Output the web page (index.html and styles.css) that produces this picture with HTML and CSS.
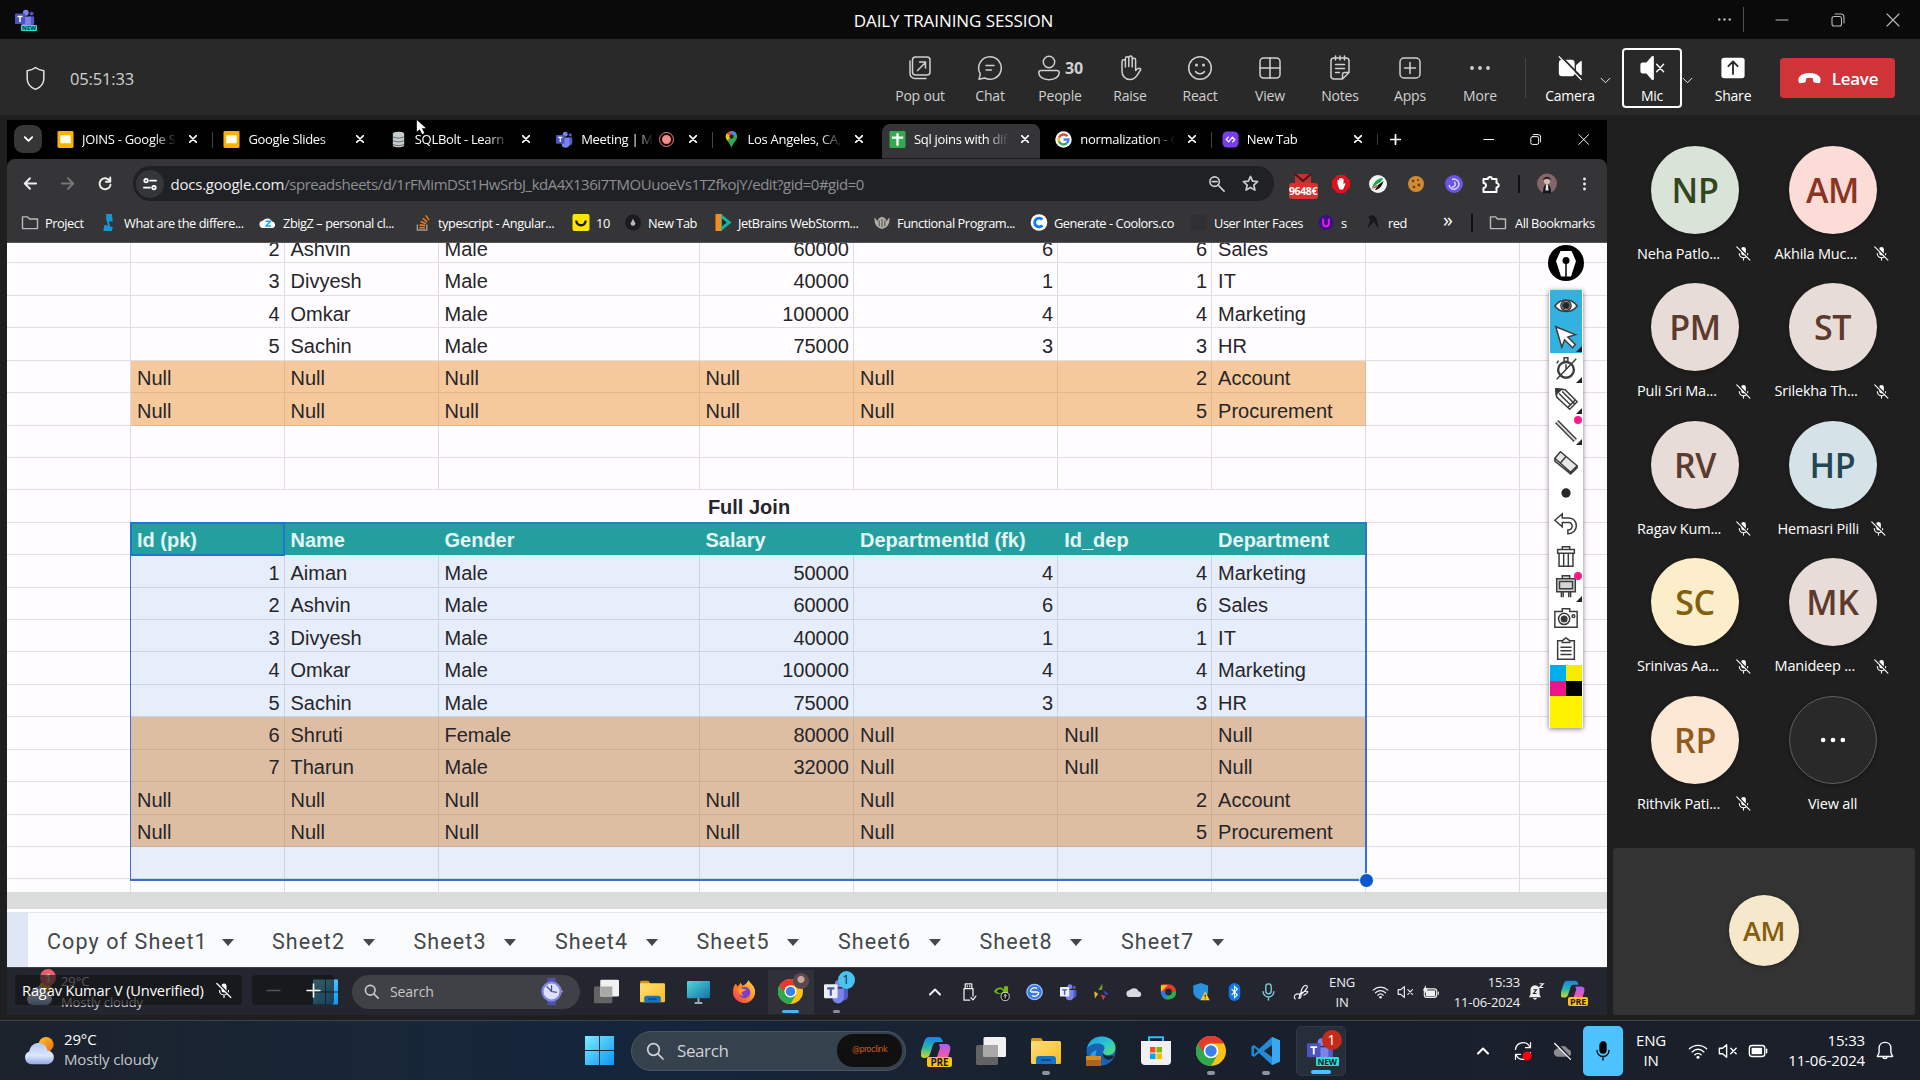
FILE: index.html
```html
<!DOCTYPE html>
<html lang="en">
<head>
<meta charset="utf-8">
<title>DAILY TRAINING SESSION</title>
<link rel="stylesheet" href="styles.css">
</head>
<body>
<svg class="defs" width="0" height="0">
  <defs>
    <linearGradient id="gWin" x1="0" y1="0" x2="1" y2="1"><stop offset="0" stop-color="#7fecff"/><stop offset="1" stop-color="#0a94f5"/></linearGradient>
    <linearGradient id="gCloud" x1="0" y1="0" x2="0" y2="1"><stop offset="0" stop-color="#b5c8f5"/><stop offset=".6" stop-color="#dbe6fb"/><stop offset="1" stop-color="#8ea9e6"/></linearGradient>
    <linearGradient id="gSun" x1="0" y1="0" x2="1" y2="1"><stop offset="0" stop-color="#ffc53a"/><stop offset="1" stop-color="#f06a00"/></linearGradient>
    <linearGradient id="gCopA" x1="0" y1="0" x2="0" y2="1"><stop offset="0" stop-color="#1e7fe8"/><stop offset=".5" stop-color="#24b7a8"/><stop offset="1" stop-color="#d7d52a"/></linearGradient>
    <linearGradient id="gCopB" x1="0" y1="0" x2="0" y2="1"><stop offset="0" stop-color="#a95cf5"/><stop offset=".6" stop-color="#ec5aa8"/><stop offset="1" stop-color="#ff8a4c"/></linearGradient>
    <linearGradient id="gFold" x1="0" y1="0" x2="1" y2="1"><stop offset="0" stop-color="#ffe07a"/><stop offset="1" stop-color="#f9b91d"/></linearGradient>
    <linearGradient id="gEdge" x1="0" y1="0" x2="1" y2="1"><stop offset="0" stop-color="#1b9de2"/><stop offset=".5" stop-color="#2bc3d2"/><stop offset="1" stop-color="#5be36a"/></linearGradient>
    <linearGradient id="gDesk" x1="0" y1="0" x2="1" y2="1"><stop offset="0" stop-color="#4fd8de"/><stop offset="1" stop-color="#1571a5"/></linearGradient>
    <linearGradient id="gFox" x1="1" y1="0" x2="0" y2="1"><stop offset="0" stop-color="#ffe14a"/><stop offset=".5" stop-color="#ff8a1f"/><stop offset="1" stop-color="#ef2a5b"/></linearGradient>

    <symbol id="shield" viewBox="0 0 24 24"><path d="M12 1.500c2.400 2 4.900 2.800 8 3v7.500c0 5-3 8.500-8 10.500-5-2-8-5.500-8-10.500V4.500c3.100-.2 5.600-1 8-3z"/></symbol>
    <symbol id="popout" viewBox="0 0 26 26"><rect x="5.500" y="2" width="17.500" height="18" rx="3"/><path d="M3 6v12.500a5 5 0 0 0 5 5h11M10.500 15.500l8-8M12.500 7h6v6"/></symbol>
    <symbol id="chat" viewBox="0 0 26 26"><path d="M13 1.700a11.300 11.300 0 1 1-5.300 21.300L2 24.300l1.300-5.500A11.300 11.300 0 0 1 13 1.700zM9 10.500h8M9 15h5.500"/></symbol>
    <symbol id="people" viewBox="0 0 26 26"><circle cx="13" cy="7" r="5.700"/><path d="M5 15.500h16a2.200 2.200 0 0 1 2.200 2.200c0 4-4 7-10.200 7s-10.200-3-10.200-7A2.200 2.200 0 0 1 5 15.500z"/></symbol>
    <symbol id="hand" viewBox="0 0 26 26"><path d="M5 14V6.500a1.700 1.700 0 0 1 3.400 0V12V3.500a1.700 1.700 0 0 1 3.400 0V11.500V2.800a1.700 1.700 0 0 1 3.400 0V12V5a1.700 1.700 0 0 1 3.400 0V15.500c1.300-1.600 3.300-2.700 4.600-1.800.8.600.4 1.400-.3 2.300-2.500 3.200-4 8.500-9.600 8.500C7.700 24.500 5 20.500 5 16z"/></symbol>
    <symbol id="smile" viewBox="0 0 26 26"><circle cx="13" cy="13" r="11.300"/><path d="M8.500 16.500c2 3 7 3 9 0"/><g class="dot"><circle cx="9.500" cy="10" r="1.500"/><circle cx="16.500" cy="10" r="1.500"/></g></symbol>
    <symbol id="gridv" viewBox="0 0 26 26"><rect x="3" y="3" width="20" height="20" rx="3.500"/><path d="M13 3v20M3 13h20"/></symbol>
    <symbol id="notes" viewBox="0 0 26 26"><path d="M7 3h12a3 3 0 0 1 3 3v11.500L15.500 24H7a3 3 0 0 1-3-3V6a3 3 0 0 1 3-3zM22 17.500h-4.500a2 2 0 0 0-2 2V24M8.500 1v4M13 1v4M17.500 1v4M8.500 9.500h9M8.500 13.500h9M8.500 17.500h4"/></symbol>
    <symbol id="apps" viewBox="0 0 26 26"><rect x="3" y="3" width="20" height="20" rx="4"/><path d="M13 7.500v11M7.500 13h11"/></symbol>
    <symbol id="dots" viewBox="0 0 26 26"><g class="dot"><circle cx="5" cy="13" r="1.900"/><circle cx="13" cy="13" r="1.900"/><circle cx="21" cy="13" r="1.900"/></g></symbol>
    <symbol id="camoff" viewBox="0 0 28 28"><g class="dot"><rect x="2" y="5" width="17" height="18" rx="3.500"/><path d="M20.500 11l5-4.500c.6-.4 1.200 0 1.200.6v14c0 .7-.7 1-1.200.6l-5-4.500z"/></g><path class="cut" d="M4.500 1.500L28 26"/><path d="M2.500 2L26 26.500"/></symbol>
    <symbol id="spkoff" viewBox="0 0 28 28"><path class="dot" d="M16 1.500v25c-1 .8-1.800.5-2.500-.2L8 20H4a2.500 2.500 0 0 1-2.500-2.500v-7A2.500 2.500 0 0 1 4 8h4l5.500-6.300c.7-.6 1.500-.9 2.500-.2z"/><path d="M19 10l7.500 8M26.500 10L19 18"/></symbol>
    <symbol id="share" viewBox="0 0 28 28"><rect class="dot" x="1.500" y="3" width="25" height="22" rx="3"/><path class="cutl" d="M14 20.500V7.500M9 12l5-5 5 5"/></symbol>
    <symbol id="phone" viewBox="0 0 26 16"><path class="dot" d="M13 2c5 0 9 1.500 11 4.500 1.200 1.800 1 4 .3 5.700-.3.700-1 1-1.700.8l-4.300-.8c-.9-.2-1.400-.9-1.500-1.800l-.3-2.600a13 13 0 0 0-7 0l-.3 2.600c-.1.900-.6 1.600-1.500 1.800L3.400 13c-.7.200-1.400-.1-1.700-.8C1 10.500.8 8.300 2 6.500 4 3.500 8 2 13 2z"/></symbol>
    <symbol id="chev" viewBox="0 0 12 8"><path d="M1 1.500l5 5 5-5"/></symbol>
    <symbol id="chevup" viewBox="0 0 12 8"><path d="M1 6.500l5-5 5 5"/></symbol>
    <symbol id="min" viewBox="0 0 14 14"><path d="M1 7h12"/></symbol>
    <symbol id="rest" viewBox="0 0 14 14"><rect x="1" y="3.500" width="9.500" height="9.500" rx="2"/><path d="M4 1h6a3 3 0 0 1 3 3v6"/></symbol>
    <symbol id="x" viewBox="0 0 14 14"><path d="M1 1l12 12M13 1L1 13"/></symbol>
    <symbol id="plus" viewBox="0 0 14 14"><path d="M7 1v12M1 7h12"/></symbol>
    <symbol id="micoff" viewBox="0 0 16 16"><rect class="dot" x="5.500" y="1" width="5" height="9" rx="2.500"/><path d="M3.500 8a4.500 4.500 0 0 0 9 0M8 12.500V15"/><path class="cut" d="M1.500 .5l14 14"/><path d="M.8 1l14 14"/></symbol>
    <symbol id="mic" viewBox="0 0 16 20"><rect class="body" x="5" y="1" width="6" height="11" rx="3"/><path d="M2 9.500a6 6 0 0 0 12 0M8 15.500V19"/></symbol>
    <symbol id="teams" viewBox="0 0 24 24"><circle cx="13" cy="4.500" r="3.500" fill="#7b83eb"/><circle cx="20" cy="5.500" r="2.300" fill="#5059c9"/><path d="M17 9h6v8a4 4 0 0 1-6 3z" fill="#5059c9"/><path d="M8 9h11v9a5.500 5.500 0 0 1-11 0z" fill="#7b83eb"/><rect x="0" y="5.500" width="12" height="12.500" rx="1" fill="#4b53bc"/><path d="M3 9h6M6 9v6.500" stroke="#fff" stroke-width="1.700" fill="none"/></symbol>
    <symbol id="teamsw" viewBox="0 0 24 24"><circle cx="14" cy="4.500" r="3.500" fill="#7b83eb"/><circle cx="20" cy="5.500" r="2.300" fill="#5059c9"/><path d="M17 9h6v8a4 4 0 0 1-6 3z" fill="#5059c9"/><path d="M8 9h11v9a5.500 5.500 0 0 1-11 0z" fill="#7b83eb"/><rect x="0" y="5" width="13" height="13.500" rx="1" fill="#eceefc"/><path d="M3 9h7M6.500 9v7" stroke="#4b53bc" stroke-width="2" fill="none"/></symbol>
    <symbol id="slides" viewBox="0 0 18 18"><rect x=".5" y="0" width="17" height="18" rx="1.500" fill="#f4b400"/><rect x="3.500" y="4.500" width="11" height="8.500" fill="#fffbe8"/></symbol>
    <symbol id="db" viewBox="0 0 18 18"><path d="M3 3c0-3 12-3 12 0v12c0 3-12 3-12 0z" fill="#c5ccce"/><path d="M3 6c2 2 10 2 12 0M3 10c2 2 10 2 12 0M3 14c2 2 10 2 12 0" stroke="#5a6468" fill="none"/></symbol>
    <symbol id="pin" viewBox="0 0 18 18"><path d="M9 0a6 6 0 0 1 6 6c0 4-4.500 6-6 12C7.500 12 3 10 3 6a6 6 0 0 1 6-6z" fill="#34a853"/><path d="M9 0a6 6 0 0 0-5 2.700L9 6z" fill="#ea4335"/><path d="M4 2.700A6 6 0 0 0 4.500 10L9 6z" fill="#fbbc04"/><path d="M9 0a6 6 0 0 1 5.500 3.500L9 6z" fill="#4285f4"/><circle cx="9" cy="6" r="2.200" fill="#123"/></symbol>
    <symbol id="sheets" viewBox="0 0 18 18"><rect x=".5" y="0" width="17" height="18" rx="1.500" fill="#34a853"/><path d="M9 2.500v13M3 7h12" stroke="#fff" stroke-width="2.400"/></symbol>
    <symbol id="google" viewBox="0 0 18 18"><circle cx="9" cy="9" r="8.700" fill="#fff"/><g fill="none" stroke-width="2.600"><path d="M13 5.500A5.200 5.200 0 0 0 4.300 6.800" stroke="#ea4335"/><path d="M4.300 6.800a5.200 5.200 0 0 0 0 4.400" stroke="#fbbc04"/><path d="M4.300 11.200a5.200 5.200 0 0 0 8.300 1.600" stroke="#34a853"/><path d="M12.600 12.800A5 5 0 0 0 14.200 9H9" stroke="#4285f4"/></g></symbol>
    <symbol id="codeapp" viewBox="0 0 18 18"><rect x=".5" y=".5" width="17" height="17" rx="5" fill="#7a3cf0"/><path d="M7 6L4.500 9 7 11.500l4-5L13.500 9 11 12" stroke="#fff" stroke-width="1.300" fill="none"/></symbol>
    <symbol id="folder" viewBox="0 0 18 16"><path d="M1 2h5.500l2 2.200H17V14.500H1z"/></symbol>
    <symbol id="win" viewBox="0 0 30 30"><path d="M0 0h14.500v14.500H0zM15.500 0H30v14.500H15.500zM0 15.500h14.500V30H0zM15.500 15.500H30V30H15.500z" fill="url(#gWin)"/></symbol>
    <symbol id="search" viewBox="0 0 18 18"><circle cx="7.500" cy="7.500" r="5.800"/><path d="M11.700 11.700L17 17"/></symbol>
    <symbol id="taskview" viewBox="0 0 30 28"><rect x="0" y="8" width="22" height="20" rx="1.500" fill="#636363"/><rect x="7.500" y="0" width="22.500" height="20" rx="1.500" fill="#f1f1f1"/><rect x="7.500" y="8" width="14.500" height="12" fill="#a8a8a8"/></symbol>
    <symbol id="copilot" viewBox="0 0 30 30"><path d="M8 1h9c3 0 4 2 5 5h-6c-3 0-4 2-5 6l-2 6c-1 3-3 4-6 4-3 0-4-3-3-7l3-9c1-3 2-5 5-5z" fill="url(#gCopA)"/><path d="M18 8h7c4 0 5 3 4 7l-3 9c-1 2-2 3-5 3H10c4 0 5-3 6-6l3-9z" fill="url(#gCopB)"/></symbol>
    <symbol id="explorer" viewBox="0 0 30 28"><path d="M0 3a2 2 0 0 1 2-2h8l3 4h-13z" fill="#d99309"/><rect x="0" y="4" width="30" height="23" rx="1.500" fill="url(#gFold)"/><path d="M5 27v-5a3 3 0 0 1 3-3h14a3 3 0 0 1 3 3v5z" fill="#1573c6"/><path d="M10 23h10" stroke="#0a3f7c" stroke-width="1.500"/></symbol>
    <symbol id="edge" viewBox="0 0 30 30"><circle cx="15" cy="15" r="14.500" fill="#1463b4"/><path d="M1 13C3 4 9 .5 16 .5c8 0 13.500 5 13.500 11 0 5-3.500 7.500-7.500 7.500s-5-1.500-5-3c0-1 1.500-1.500 1.500-4s-3-4.500-7-4.500S2.500 9.500 1 13z" fill="url(#gEdge)"/><path d="M17 17c1 3 5 4 9 2.500l2 1c-2 3-5 3.500-7 3-3-1-4.500-3.500-4-6.500z" fill="#1a2434"/><path d="M11 14c-3 5-1 12 5 14.500-5 .5-9-1-11-4-2-4-.5-9 6-10.500z" fill="#2f9fe6"/><rect x="0" y="20" width="15" height="10" fill="#a9671c"/><path d="M0 20h15v4H0z" fill="#d78b22"/></symbol>
    <symbol id="store" viewBox="0 0 30 30"><path d="M8 6V1.200h14V6" fill="none" stroke="#2cc0f5" stroke-width="2"/><path d="M0 5h30v20a4 4 0 0 1-4 4H4a4 4 0 0 1-4-4z" fill="#f1f1f4"/><path d="M9 11h5.500v5.500H9z" fill="#f25022"/><path d="M15.500 11H21v5.500h-5.500z" fill="#7fba00"/><path d="M9 17.500h5.500V23H9z" fill="#00a4ef"/><path d="M15.500 17.500H21V23h-5.500z" fill="#ffb900"/></symbol>
    <symbol id="chrome" viewBox="0 0 30 30"><circle cx="15" cy="15" r="15" fill="#fbc116"/><path d="M2 7.500A15 15 0 0 0 15 30l6.500-11.200L15 15z" fill="#2da94f"/><path d="M2 7.500A15 15 0 0 1 28 7.500H15a7.500 7.500 0 0 0-6.500 11.300z" fill="#e33b2e"/><circle cx="15" cy="15" r="7.300" fill="#fff"/><circle cx="15" cy="15" r="5.700" fill="#3b80ee"/></symbol>
    <symbol id="vscode" viewBox="0 0 30 30"><path d="M21 1l8 3.500v21L21 29 8 17 3 21l-2.500-1.500v-9L3 9l5 4z" fill="#2489d6"/><path d="M21 9v12l-8-6z" fill="#1b2635"/><path d="M3 11.500L7 15l-4 3.500z" fill="#1b2635"/><path d="M21 1l8 3.500v21L21 29z" fill="#38a8f2"/></symbol>
    <symbol id="wifi" viewBox="0 0 22 18"><path d="M1.500 6.500c5.500-5 13.500-5 19 0M4.500 10c4-3.500 9-3.500 13 0M7.500 13.200c2-2 5-2 7 0"/><circle class="dot" cx="11" cy="15.800" r="1.700"/></symbol>
    <symbol id="vol" viewBox="0 0 22 18"><path d="M9.500 2v14L5 12H1.500V6H5zM14 6l6 6M20 6l-6 6"/></symbol>
    <symbol id="bat" viewBox="0 0 22 16"><rect x="1.500" y="2" width="17" height="12" rx="3"/><rect class="dot" x="4" y="4.500" width="11.500" height="7"/><path d="M20.500 6v4"/></symbol>
    <symbol id="bell" viewBox="0 0 20 22"><path d="M10 1.500c3.800 0 6.500 2.700 6.500 6.500v5l2 4h-17l2-4V8c0-3.800 2.700-6.500 6.500-6.500zM7.500 17.500c.5 2.500 4.500 2.500 5 0"/></symbol>
    <symbol id="cloud" viewBox="0 0 30 20"><path d="M7 19a6 6 0 0 1-.5-12A9 9 0 0 1 22 8.500 5.500 5.500 0 0 1 23.500 19z"/></symbol>
    <symbol id="weather" viewBox="0 0 32 30"><circle cx="22.500" cy="8" r="8" fill="url(#gSun)"/><path d="M7 29A7 7 0 0 1 4.500 15.500C6 9 10 6.500 14.500 6.500c5 0 8.500 3 9.500 8A7.300 7.300 0 0 1 24.500 29z" fill="url(#gCloud)"/></symbol>
  </defs>
</svg>

<header class="titlebar">
  <span class="app-icon"><svg class="ic20"><use href="#teams"/></svg><b class="new-tag">NEW</b></span>
  <h1>DAILY TRAINING SESSION</h1>
  <div class="win-ctl">
    <svg class="ln more"><use href="#dots"/></svg><i class="vr"></i>
    <svg class="ln"><use href="#min"/></svg><svg class="ln"><use href="#rest"/></svg><svg class="ln"><use href="#x"/></svg>
  </div>
</header>

<section class="callbar">
  <svg class="ln guard"><use href="#shield"/></svg><span class="timer">05:51:33</span>
  <nav class="actions">
    <button><svg class="ln"><use href="#popout"/></svg><span>Pop out</span></button>
    <button><svg class="ln"><use href="#chat"/></svg><span>Chat</span></button>
    <button><span class="pp"><svg class="ln"><use href="#people"/></svg><b>30</b></span><span>People</span></button>
    <button><svg class="ln"><use href="#hand"/></svg><span>Raise</span></button>
    <button><svg class="ln"><use href="#smile"/></svg><span>React</span></button>
    <button><svg class="ln"><use href="#gridv"/></svg><span>View</span></button>
    <button><svg class="ln"><use href="#notes"/></svg><span>Notes</span></button>
    <button><svg class="ln"><use href="#apps"/></svg><span>Apps</span></button>
    <button><svg class="ln"><use href="#dots"/></svg><span>More</span></button>
  </nav>
  <i class="vr tall"></i>
  <div class="actions media">
    <button><svg class="ln"><use href="#camoff"/></svg><span>Camera</span></button>
    <svg class="ln caret"><use href="#chev"/></svg>
    <button class="focus"><svg class="ln"><use href="#spkoff"/></svg><span>Mic</span></button>
    <svg class="ln caret"><use href="#chev"/></svg>
    <button class="sharebtn"><svg class="ln"><use href="#share"/></svg><span>Share</span></button>
  </div>
  <button class="leave"><svg><use href="#phone"/></svg>Leave</button>
</section>

<main class="stage">
  <section class="shared">
    <div class="tabstrip">
      <span class="tabsearch"><svg class="ln"><use href="#chev"/></svg></span>
      <div class="tab"><svg><use href="#slides"/></svg><span>JOINS - Google S</span><svg class="ln cl"><use href="#x"/></svg></div>
      <div class="tab sep"><svg><use href="#slides"/></svg><span>Google Slides</span><svg class="ln cl"><use href="#x"/></svg></div>
      <div class="tab"><svg><use href="#db"/></svg><span>SQLBolt - Learn</span><svg class="ln cl"><use href="#x"/></svg></div>
      <div class="tab"><svg><use href="#teams"/></svg><span class="short">Meeting | Mi</span><i class="rec"></i><svg class="ln cl"><use href="#x"/></svg></div>
      <div class="tab sep"><svg><use href="#pin"/></svg><span>Los Angeles, CA,</span><svg class="ln cl"><use href="#x"/></svg></div>
      <div class="tab active"><svg><use href="#sheets"/></svg><span>Sql joins with dif</span><svg class="ln cl"><use href="#x"/></svg></div>
      <div class="tab"><svg><use href="#google"/></svg><span>normalization - G</span><svg class="ln cl"><use href="#x"/></svg></div>
      <div class="tab sep"><svg><use href="#codeapp"/></svg><span>New Tab</span><svg class="ln cl"><use href="#x"/></svg></div>
      <div class="newtab"><svg class="ln"><use href="#plus"/></svg></div>
      <div class="bwin"><svg class="ln"><use href="#min"/></svg><svg class="ln"><use href="#rest"/></svg><svg class="ln"><use href="#x"/></svg></div>
    </div>
    <div class="addr">
      <svg class="ln nav" viewBox="0 0 16 16"><path d="M15 8H2M8 2L2 8l6 6"/></svg>
      <svg class="ln nav dim" viewBox="0 0 16 16"><path d="M1 8h13M8 2l6 6-6 6"/></svg>
      <svg class="ln nav" viewBox="0 0 16 16"><path d="M13.500 5A6.300 6.300 0 1 0 14.300 9.500M14 1v5H9"/></svg>
      <div class="omni">
        <span class="site"><svg class="ln" viewBox="0 0 16 16"><circle cx="3.500" cy="4" r="2"/><path d="M8 4h7M1 12h7"/><circle cx="12.500" cy="12" r="2"/></svg></span>
        <span class="url"><b>docs.google.com</b>/spreadsheets/d/1rFMimDSt1HwSrbJ_kdA4X136i7TMOUuoeVs1TZfkojY/edit?gid=0#gid=0</span>
        <svg class="ln oi" viewBox="0 0 18 18"><circle cx="7" cy="7" r="5"/><path d="M10.500 10.500L17 17M4.500 7h5"/></svg>
        <svg class="ln oi" viewBox="0 0 18 18"><path d="M9 1.500l2.200 5 5.300.5-4 3.600 1.200 5.400L9 13.200 4.300 16l1.200-5.400-4-3.600 5.300-.5z"/></svg>
      </div>
      <div class="exts">
        <span class="mail"><svg viewBox="0 0 18 12"><path d="M1 1h16v11H1z" fill="#b33"/><path d="M1 1l8 7 8-7" stroke="#511" stroke-width="2" fill="none"/></svg><b>9648€</b></span>
        <span><svg viewBox="0 0 18 18"><path d="M5.500 0h7L18 5.500v7L12.500 18h-7L0 12.500v-7z" fill="#e3101d"/><path d="M5.500 9V5h1.500V3.500h1.500V3H10v.8h1.500V9l1.500-1 .5 1-2.500 5.500H7.500z" fill="#fff"/></svg></span>
        <span><svg viewBox="0 0 18 18"><circle cx="9" cy="9" r="9" fill="#f4f4f4"/><path d="M3 14C4 8 8 3 14 3c-1 3-3 5-6 6z" fill="#17a54a"/><path d="M6 15c3 0 7-3 8.500-9L9 10z" fill="#111"/><path d="M3 14l5-4 1 2z" fill="#e33"/></svg></span>
        <span><svg viewBox="0 0 18 18"><circle cx="9" cy="9" r="8" fill="#d08a32"/><g fill="#6a3a10"><circle cx="6" cy="6" r="1.300"/><circle cx="11" cy="5" r="1"/><circle cx="12" cy="10" r="1.400"/><circle cx="7" cy="12" r="1.300"/></g></svg></span>
        <span><svg viewBox="0 0 18 18"><circle cx="9" cy="9" r="9" fill="#6a55e8"/><path d="M4 10a5 5 0 1 0 3-5.500M7 12c4 0 4-4 2-5" stroke="#d9d4ff" stroke-width="1.500" fill="none"/></svg></span>
        <span><svg class="ln w2" viewBox="0 0 18 18"><path d="M1.500 4H6a2 2 0 1 1 4 0h4.500v4a2.200 2.200 0 1 1 0 4.400V17h-13v-4a2.500 2.500 0 0 0 0-5z"/></svg></span>
        <i class="bar"></i>
        <span class="me"><svg viewBox="0 0 20 20"><circle cx="10" cy="10" r="10" fill="#84666c"/><path d="M6 20c0-6 1-9 4-9s4 3 4 9z" fill="#15161c"/><path d="M9 11h2l.5 6h-3z" fill="#e8e8f0"/><circle cx="10" cy="7.500" r="3.200" fill="#d8b8a6"/><path d="M6 7c0-5 8-5 8 0-2-2-6-2-8 0z" fill="#2b2024"/></svg></span>
        <span class="kebab"><svg viewBox="0 0 6 18"><g fill="#eee"><circle cx="3" cy="3" r="1.700"/><circle cx="3" cy="9" r="1.700"/><circle cx="3" cy="15" r="1.700"/></g></svg></span>
      </div>
    </div>
    <div class="marks">
      <a><svg class="ln"><use href="#folder"/></svg>Project</a>
      <a><svg viewBox="0 0 18 18"><path d="M6 0h6l1 8h-4l1 5 3 1-1 4H3l1-6h4L6 6z" fill="#1597d4"/></svg>What are the differe...</a>
      <a><svg viewBox="0 0 30 20" fill="#fff"><use href="#cloud"/><path d="M11 8h8l-7 8h8" fill="none" stroke="#18a5dc" stroke-width="2.500"/></svg>ZbigZ – personal cl...</a>
      <a><svg viewBox="0 0 18 18"><path d="M3 11v6h10v-6" fill="none" stroke="#9a9a9a" stroke-width="1.500"/><path d="M5 14.500h6M5.300 11.500l6 .8M6.500 8l5.600 2.300M8.800 4.500l4.600 4M12 1.500l3.300 5" stroke="#e87922" stroke-width="1.700"/></svg>typescript - Angular...</a>
      <a><svg viewBox="0 0 18 18"><rect width="18" height="18" rx="2" fill="#ffe600"/><path d="M4 7c0 6 9 7 10 0" fill="none" stroke="#1d1d1d" stroke-width="2.500"/></svg>10</a>
      <a><svg viewBox="0 0 18 18"><circle cx="9" cy="9" r="8.500" fill="#1c1c1e"/><path d="M9 5l2.500 5a2.500 2.500 0 1 1-5 0z" fill="#bbb"/></svg>New Tab</a>
      <a><svg viewBox="0 0 18 18"><path d="M1 0h7v18H1z" fill="#f68b1f"/><path d="M7 0l11 9-11 9z" fill="#12b5a6"/><path d="M8 5l5 4-5 4z" fill="#222"/></svg>JetBrains WebStorm...</a>
      <a><svg viewBox="0 0 18 18"><path d="M1 4c0 7 2 10 8 12 6-2 8-5 8-12-2 1-2 2-3 4-1-3-2-4-5-5-3 1-4 2-5 5-1-2-1-3-3-4z" fill="#b4b1a8"/><path d="M6 7v6M9 5v9M12 7v6" stroke="#55534e" stroke-width="1.200"/></svg>Functional Program...</a>
      <a><svg viewBox="0 0 18 18"><circle cx="9" cy="9" r="8.800" fill="#fff"/><path d="M12.500 6A4.600 4.600 0 1 0 12.500 12" fill="none" stroke="#0b7cf5" stroke-width="3"/></svg>Generate - Coolors.co</a>
      <a><svg viewBox="0 0 18 18"><rect x="1" y="1" width="16" height="16" fill="#303032"/></svg>User Inter Faces</a>
      <a><svg viewBox="0 0 18 18"><circle cx="9" cy="9" r="8" fill="#3c0f8a"/><path d="M6 5v5a3 3 0 0 0 6 0V5" fill="none" stroke="#e01fd0" stroke-width="2.200"/></svg>s</a>
      <a><svg viewBox="0 0 18 18"><path d="M3 16L6 6 4 3l5-2 4 4 2 11-3-5-2-3-2 2z" fill="#18181a"/></svg>red</a>
      <span class="ovf">»</span><i class="bar"></i>
      <a><svg class="ln"><use href="#folder"/></svg>All Bookmarks</a>
    </div>

    <div class="sheet">
      <div class="row"><p class="n">2</p><p>Ashvin</p><p>Male</p><p class="n">60000</p><p class="n">6</p><p class="n">6</p><p>Sales</p></div>
      <div class="row"><p class="n">3</p><p>Divyesh</p><p>Male</p><p class="n">40000</p><p class="n">1</p><p class="n">1</p><p>IT</p></div>
      <div class="row"><p class="n">4</p><p>Omkar</p><p>Male</p><p class="n">100000</p><p class="n">4</p><p class="n">4</p><p>Marketing</p></div>
      <div class="row"><p class="n">5</p><p>Sachin</p><p>Male</p><p class="n">75000</p><p class="n">3</p><p class="n">3</p><p>HR</p></div>
      <div class="row peach"><p>Null</p><p>Null</p><p>Null</p><p>Null</p><p>Null</p><p class="n">2</p><p>Account</p></div>
      <div class="row peach"><p>Null</p><p>Null</p><p>Null</p><p>Null</p><p>Null</p><p class="n">5</p><p>Procurement</p></div>
      <div class="row"><p></p><p></p><p></p><p></p><p></p><p></p><p></p></div>
      <div class="row"><p></p><p></p><p></p><p></p><p></p><p></p><p></p></div>
      <div class="row"><p class="merged">Full Join</p></div>
      <div class="row head"><p>Id (pk)</p><p>Name</p><p>Gender</p><p>Salary</p><p>DepartmentId (fk)</p><p>Id_dep</p><p>Department</p></div>
      <div class="row blue"><p class="n">1</p><p>Aiman</p><p>Male</p><p class="n">50000</p><p class="n">4</p><p class="n">4</p><p>Marketing</p></div>
      <div class="row blue"><p class="n">2</p><p>Ashvin</p><p>Male</p><p class="n">60000</p><p class="n">6</p><p class="n">6</p><p>Sales</p></div>
      <div class="row blue"><p class="n">3</p><p>Divyesh</p><p>Male</p><p class="n">40000</p><p class="n">1</p><p class="n">1</p><p>IT</p></div>
      <div class="row blue"><p class="n">4</p><p>Omkar</p><p>Male</p><p class="n">100000</p><p class="n">4</p><p class="n">4</p><p>Marketing</p></div>
      <div class="row blue"><p class="n">5</p><p>Sachin</p><p>Male</p><p class="n">75000</p><p class="n">3</p><p class="n">3</p><p>HR</p></div>
      <div class="row tan"><p class="n">6</p><p>Shruti</p><p>Female</p><p class="n">80000</p><p>Null</p><p>Null</p><p>Null</p></div>
      <div class="row tan"><p class="n">7</p><p>Tharun</p><p>Male</p><p class="n">32000</p><p>Null</p><p>Null</p><p>Null</p></div>
      <div class="row tan"><p>Null</p><p>Null</p><p>Null</p><p>Null</p><p>Null</p><p class="n">2</p><p>Account</p></div>
      <div class="row tan"><p>Null</p><p>Null</p><p>Null</p><p>Null</p><p>Null</p><p class="n">5</p><p>Procurement</p></div>
      <div class="row blue"><p></p><p></p><p></p><p></p><p></p><p></p><p></p></div>
      <div class="row"><p></p><p></p><p></p><p></p><p></p><p></p><p></p></div>
      <div class="selection"><i class="cellbox"></i><i class="handle"></i></div>
    </div>
    <div class="hscroll"></div>
    <div class="sheettabs">
      <span class="cur"></span>
      <span class="first">Copy of Sheet1<i></i></span><span>Sheet2<i></i></span><span>Sheet3<i></i></span><span>Sheet4<i></i></span><span>Sheet5<i></i></span><span>Sheet6<i></i></span><span>Sheet8<i></i></span><span>Sheet7<i></i></span>
    </div>

    <div class="rtask">
      <div class="rweather"><svg><use href="#weather"/></svg><p>29°C<br>Mostly cloudy</p><b>1</b></div>
      <svg class="rwin"><use href="#win"/></svg>
      <div class="rsearch"><svg class="ln"><use href="#search"/></svg>Search<svg class="watch" viewBox="0 0 24 32"><path d="M7 1h9v30H7z" fill="#4e53ae"/><circle cx="11.500" cy="16" r="10" fill="#dfe1fb" stroke="#7f86e0" stroke-width="2.500"/><path d="M11.500 16V9M11.500 16l6 1M11.500 16L6 10" stroke="#434a96" stroke-width="1.300"/><circle cx="23" cy="16" r="1" fill="#aab"/></svg></div>
      <div class="rapps">
        <span><svg><use href="#taskview"/></svg></span>
        <span><svg><use href="#explorer"/></svg></span>
        <span><svg viewBox="0 0 26 26"><rect x="1" y="2" width="24" height="18" rx="1" fill="url(#gDesk)"/><path d="M9 25h8M13 20v5" stroke="#9ab" stroke-width="2"/></svg></span>
        <span><svg viewBox="0 0 26 26"><path d="M17 1c1 3 8 6 7 14-1 6-6 10-11 10S1 21 1 14c0-4 1-7 3-9l2 3 3-4 2 3c3-1 5-3 6-6z" fill="url(#gFox)"/><circle cx="13" cy="14" r="6" fill="#7a3fd0"/><path d="M7 10c3-1 5 1 8 1-2 2-5 2-5 4 0 1 1 2 3 2-5 2-7-3-6-7z" fill="#ff9a2a"/></svg></span>
        <span class="on"><svg><use href="#chrome"/></svg><i class="face"></i></span>
        <span class="run"><svg><use href="#teamsw"/></svg><b>1</b></span>
      </div>
      <div class="rtray">
        <span><svg class="ln w2 sm"><use href="#chevup"/></svg></span>
        <span><svg class="ln" viewBox="0 0 20 22"><path d="M6 7V1h8v6M4.500 7h11v9M4.500 7v14h7M13 18l2.500 2.500L19 16M8.500 3.500v1M11.500 3.500v1"/></svg></span>
        <span><svg viewBox="0 0 20 22"><path d="M1 10c3-5 9-6 12-2V4H18v9H8c-3 1-5 0-7-3z" fill="#74b71b"/><path d="M4 10c2-3 6-3 8 0-2 3-6 3-8 0z" fill="#152010"/><circle cx="14.500" cy="16.500" r="5" fill="#111" stroke="#eee"/><path d="M14.500 19v-5M12.500 16l2-2 2 2" stroke="#fff" fill="none"/></svg></span>
        <span><svg viewBox="0 0 20 20"><circle cx="10" cy="10" r="9" fill="#3a78e0" stroke="#9cc0ff" stroke-width="1.500"/><path d="M5 10a5 5 0 0 1 8-4M15 10a5 5 0 0 1-8 4M6 10h8" stroke="#fff" stroke-width="1.500" fill="none"/></svg></span>
        <span><svg><use href="#teamsw"/></svg></span>
        <span><svg viewBox="0 0 20 22"><path d="M11 1L6 9l5-1z" fill="#7aa52b"/><path d="M1 10l5 3-4 6z" fill="#e2b52b"/><path d="M12 9l7 4-4 2z" fill="#344cc0"/><path d="M9 14l3 7 3-5z" fill="#c73a4e"/></svg></span>
        <span><svg viewBox="0 0 30 20" fill="#d9d9de"><use href="#cloud"/></svg></span>
        <span><svg viewBox="0 0 20 20"><path d="M2 1h8a9 9 0 0 1 9 9H1z" fill="#e23c2d"/><path d="M19 10a9 9 0 0 1-17 4l8-4z" fill="#29b04a"/><path d="M1 10V2h8z" fill="#f4c52b"/><path d="M1 9a9 9 0 0 0 6 9l3-8z" fill="#2a7be8"/><circle cx="10" cy="10" r="4" fill="#252733"/></svg></span>
        <span><svg viewBox="0 0 20 22"><path d="M9 0l9 3v7c0 6-4 8-9 11-5-3-9-5-9-11V3z" fill="#2b91dc"/><path d="M14.500 10l5.500 11H9z" fill="#ffd02b"/><path d="M14.500 14v3.500M14.500 18.500V20" stroke="#222" stroke-width="1.400"/></svg></span>
        <span><svg viewBox="0 0 16 22"><rect x="1" y="0" width="14" height="22" rx="7" fill="#0e78e8"/><path d="M4.500 7.500l7 7L8 18V4l3.500 3.500-7 7" stroke="#fff" stroke-width="1.400" fill="none"/></svg></span>
        <span class="cy"><svg class="ln"><use href="#mic"/></svg></span>
        <span><svg class="ln" viewBox="0 0 22 22"><path d="M3 20C-1 16 5 12 8 14s-3 7 1 5S8 12 12 6s8-3 6 0-8 10-9 8 6-4 9-4-1 4-4 5"/></svg></span>
        <p class="lang">ENG<br>IN</p>
        <span class="st"><svg class="ln"><use href="#wifi"/></svg></span><span class="st"><svg class="ln"><use href="#vol"/></svg></span><span class="st"><svg class="ln" viewBox="0 0 22 20"><rect x="3" y="6" width="16" height="11" rx="3"/><rect class="dot" x="5" y="8" width="12" height="7.500"/><path d="M21 10v3"/><path class="dot" d="M5 1v4h3L4 12V8H1z"/></svg></span>
        <p class="clock">15:33<br>11-06-2024</p>
        <span class="st dnd"><svg viewBox="0 0 22 24"><path d="M9 3c4 0 6 3 6 6v6l2 4H1l2-4V9c0-3 2-6 6-6zM6.500 20h5c-.5 3-4.500 3-5 0z" fill="#eee"/><path d="M7 9h4l-4 5h4" stroke="#222" stroke-width="1.500" fill="none"/><path d="M15 1h5l-5 5h5" stroke="#eee" stroke-width="1.600" fill="none"/></svg></span>
        <span class="cop"><svg><use href="#copilot"/></svg><b>PRE</b></span>
      </div>
    </div>

    <div class="who">Ragav Kumar V (Unverified)<svg class="ln"><use href="#micoff"/></svg></div>
    <div class="zoomer"><svg class="ln dim"><use href="#min"/></svg><svg class="ln"><use href="#plus"/></svg></div>

    <svg class="pen" viewBox="0 0 36 36"><circle cx="18" cy="18" r="18" fill="#000"/><path d="M12.500 6h11l4.500 10-5 15.500h-2.500h-5H13L8 16z" fill="#fff"/><circle cx="18" cy="15.500" r="3.500" fill="#000"/><path d="M18 16v16" stroke="#000" stroke-width="1.500"/></svg>
    <div class="tools">
      <span class="hl"><svg viewBox="0 0 28 28"><path d="M2 14C8 5.500 20 5.500 26 14 20 22 8 22 2 14z" fill="#fff"/><circle cx="14" cy="13.500" r="5.500"/><circle cx="14" cy="13.500" r="3.500" fill="#222"/></svg></span>
      <span class="hl c"><svg viewBox="0 0 28 28"><path d="M3 3l21 8.500-8 2.500 8 8-3 3.500-8.500-8.500L9.500 25z" fill="#fff"/></svg></span>
      <span class="c"><svg viewBox="0 0 28 28"><circle cx="14" cy="16" r="8.500" stroke-width="2.500"/><path d="M12 3h4v4h-4zM14 10v6M25 4L4 26M6 6L4 9"/></svg></span>
      <span class="c"><svg viewBox="0 0 28 28"><path d="M3 3l10 1 13 13-8 8L4 12zM6.500 8l13 13M10 6l13 13M16 23l8-8"/><path d="M3 3l6 .5L3.500 9z" fill="#333"/></svg></span>
      <span class="c d"><svg viewBox="0 0 28 28"><path d="M4 4l20 20" stroke-width="5"/><path d="M4 4l20 20" stroke="#ddd" stroke-width="2"/></svg></span>
      <span><svg viewBox="0 0 28 28"><path d="M8 3L2 10l17 15 7-7zM14 8l-6 7M2 10v3l17 14 7-7v-2M19 25v2" fill="#e6e8e8"/></svg></span>
      <span><svg viewBox="0 0 28 28"><circle cx="14" cy="14" r="5" fill="#25282b" stroke="none"/></svg></span>
      <span><svg viewBox="0 0 28 28"><path d="M2 10l8-7v4.500h7c11 0 11 17-1 17v-4c6 0 6-8 1-8h-7V17z"/></svg></span>
      <span><svg viewBox="0 0 28 28"><path d="M5 7h18v4H5zM10 7V4h8v3M6.500 11v14h15V11M11.500 11v14M16.500 11v14"/></svg></span>
      <span class="c d"><svg viewBox="0 0 28 28"><path d="M4 5h20v14H4zM10 5V2h8v3M9 19v6M11 19v6M17 19v6M19 19v6" fill="#d5d8d5"/><path d="M7 8h14v8H7z"/></svg></span>
      <span><svg viewBox="0 0 28 28"><path d="M2 7h8V4h8v3h8v17H2z"/><circle cx="12" cy="15" r="6"/><circle cx="12" cy="15" r="3" fill="#333"/><circle cx="22" cy="12" r="1.500"/></svg></span>
      <span><svg viewBox="0 0 28 28"><path d="M5 5h5l4-3 4 3h5v20H5zM10 5v2h8V5M8 12h12M8 16h12M8 20h12"/></svg></span>
      <span class="sw"><i></i><i></i><i></i><i></i></span>
      <span class="yl"></span>
    </div>
    <svg class="pointer" viewBox="0 0 14 18"><path d="M2 0v14l3.500-3 3 6 2.500-1.500-3-5.500h5z" fill="#fff"/></svg>
  </section>

  <aside class="side">
    <div class="roster">
      <div><b class="av" style="background:#dae3d8;color:#33451f">NP</b><p>Neha Patlo...<svg class="ln"><use href="#micoff"/></svg></p></div>
      <div><b class="av" style="background:#fbdcd6;color:#8a3424">AM</b><p>Akhila Muc...<svg class="ln"><use href="#micoff"/></svg></p></div>
      <div><b class="av" style="background:#e7dcd8;color:#5c3a2c">PM</b><p>Puli Sri Ma...<svg class="ln"><use href="#micoff"/></svg></p></div>
      <div><b class="av" style="background:#e7dcd8;color:#5c3a2c">ST</b><p>Srilekha Th...<svg class="ln"><use href="#micoff"/></svg></p></div>
      <div><b class="av" style="background:#e7dcd8;color:#5c3a2c">RV</b><p>Ragav Kum...<svg class="ln"><use href="#micoff"/></svg></p></div>
      <div><b class="av" style="background:#d5e3e8;color:#234653">HP</b><p class="tight">Hemasri Pilli<svg class="ln"><use href="#micoff"/></svg></p></div>
      <div><b class="av" style="background:#fdeecb;color:#80600c">SC</b><p>Srinivas Aa...<svg class="ln"><use href="#micoff"/></svg></p></div>
      <div><b class="av" style="background:#e7dcd8;color:#5c3a2c">MK</b><p>Manideep ...<svg class="ln"><use href="#micoff"/></svg></p></div>
      <div><b class="av" style="background:#fce8d5;color:#915a1d">RP</b><p>Rithvik Pati...<svg class="ln"><use href="#micoff"/></svg></p></div>
      <div><b class="av all"><svg><use href="#dots"/></svg></b><p class="mid">View all</p></div>
    </div>
    <div class="self"><b class="av">AM</b></div>
  </aside>
</main>

<footer class="taskbar">
  <div class="weather"><svg><use href="#weather"/></svg><p>29°C<br><em>Mostly cloudy</em></p></div>
  <span class="start"><svg><use href="#win"/></svg></span>
  <div class="search"><svg class="ln"><use href="#search"/></svg>Search<span>@proclink</span></div>
  <div class="apps">
    <span class="cop"><svg><use href="#copilot"/></svg><b>PRE</b></span>
    <span><svg><use href="#taskview"/></svg></span>
    <span class="run"><svg><use href="#explorer"/></svg></span>
    <span><svg><use href="#edge"/></svg></span>
    <span><svg><use href="#store"/></svg></span>
    <span class="run"><svg><use href="#chrome"/></svg></span>
    <span class="run"><svg><use href="#vscode"/></svg></span>
    <span class="on"><svg><use href="#teams"/></svg><b class="new-tag">NEW</b><b class="cnt">1</b></span>
  </div>
  <div class="tray">
    <span><svg class="ln w2 sm"><use href="#chevup"/></svg></span>
    <span><svg class="ln" viewBox="0 0 22 24"><path d="M2 10A9 9 0 0 1 19 7M20 2v6h-6M20 14a9 9 0 0 1-17 3M2 22v-6h6"/><circle cx="16" cy="18" r="5.500" fill="#fb0007" stroke="none"/></svg></span>
    <span><svg class="ln" viewBox="0 0 24 22"><path d="M6 18a5 5 0 0 1 0-10 7 7 0 0 1 12 1 4.600 4.600 0 0 1 0 9z" fill="#8b8c8e" stroke="none"/><path class="cutc" d="M3 1l19 20"/><path d="M2 2l19 19"/></svg></span>
    <span class="micon"><svg class="ln"><use href="#mic"/></svg></span>
    <p class="lang">ENG<br>IN</p>
    <span class="st"><svg class="ln"><use href="#wifi"/></svg></span><span class="st"><svg class="ln"><use href="#vol"/></svg></span><span class="st"><svg class="ln"><use href="#bat"/></svg></span>
    <p class="clock">15:33<br>11-06-2024</p>
    <span class="st bl"><svg class="ln"><use href="#bell"/></svg></span>
  </div>
</footer>
</body>
</html>
```
FILE: styles.css
```css
* { box-sizing: border-box; }
body { margin: 0; width: 1920px; height: 1080px; overflow: hidden; display: flex; flex-direction: column; background: #1f1f1f; color: #fff; font-family: "Open Sans", "Noto Sans", sans-serif; }
p, h1 { margin: 0; font-weight: 400; }
button { border: 0; background: none; color: inherit; font: inherit; padding: 0; }
svg { display: block; flex: none; overflow: visible; }
.defs { position: absolute; }
.ln { fill: none; stroke: currentColor; stroke-width: 1.5; stroke-linecap: round; stroke-linejoin: round; }
.w2 { stroke-width: 2; }
.dot { fill: currentColor; stroke: none; }
.cut { stroke: var(--gap, #1f1f1f); stroke-width: 2; }
.body { fill: var(--mic-fill, none); }

/* meeting window title */
.titlebar { height: 39px; flex: none; background: #0a0a0a; display: grid; grid-template-columns: 1fr auto 1fr; align-items: center; padding: 0 20px 0 15px; }
.titlebar h1 { font-size: 17px; letter-spacing: -.08px; line-height: 20px; margin: 2px 8px 0 0; }
.app-icon { position: relative; width: 20px; height: 22px; }
.ic20 { width: 20px; height: 20px; }
.new-tag { position: absolute; background: #27e0d8; color: #06343a; font-size: 6px; line-height: 6px; padding: 0 1px; left: 6px; bottom: 0; border-radius: 1px; }
.win-ctl { display: flex; align-items: center; justify-content: flex-end; gap: 41.500px; color: #b9b9b9; }
.win-ctl svg { width: 14px; height: 14px; stroke-width: 1.100; }
.win-ctl .more { width: 17px; height: 17px; margin-right: -31.500px; }
.vr { width: 1px; height: 25px; background: #4d4d4d; }
.win-ctl .vr { margin-right: -10px; }

/* call controls */
.callbar { height: 76px; flex: none; background: #292929; display: flex; align-items: center; padding: 2px 25px 0 23px; }
.guard { width: 25px; height: 25px; stroke-width: 1.400; color: #e8e8e8; }
.timer { font-size: 16.500px; letter-spacing: -.15px; margin: 1px auto 0 22px; color: #d0d0d0; }
.actions { display: flex; color: #d0d0d0; }
.actions button { width: 70px; height: 60px; display: flex; flex-direction: column; align-items: center; font-size: 14px; letter-spacing: -.2px; }
.actions button > span:last-child { line-height: 18px; margin-top: 6px; }
.actions button svg { width: 26px; height: 26px; margin-top: 7px; }
.actions .pp { display: flex; gap: 3px; font-size: 16px; align-items: flex-end; }
.pp b { line-height: 25px; margin-right: 1px; }
.tall { height: 40px; background: #444; margin: 0 14px 0 10px; }
.media { color: #fff; align-items: center; --gap: #292929; }
.media button { width: 60px; }
.cutl { stroke: #292929; stroke-width: 2; }
.cutc { stroke: #1c2430; stroke-width: 3; }
.caret { width: 11px; height: 7px; margin-top: 5px; stroke-width: 1; }
.media .focus { outline: 2px solid #fff; outline-offset: -2px; border-radius: 4px; margin-left: 11px; }
.media .sharebtn { margin-left: 10px; }
.leave { width: 115px; height: 40px; margin-left: 17px; background: #d13438; border-radius: 4px; display: flex; align-items: center; justify-content: center; gap: 10px; font-weight: 600; font-size: 17px; letter-spacing: -.3px; }
.leave svg { width: 25px; height: 15px; }

.stage { height: 905px; flex: none; display: flex; gap: 6px; padding: 5px 5px 5px 7px; }
.shared { position: relative; width: 1600px; height: 895px; overflow: hidden; background: #fff; display: flex; flex-direction: column; }
.shared > div { flex: none; }

/* browser */
.tabstrip { height: 39px; background: #000; display: flex; align-items: center; padding: 0 0 1px 7px; font-size: 13px; letter-spacing: -.3px; }
.tabsearch { width: 28px; height: 28px; border-radius: 9px; background: #363636; display: grid; place-items: center; margin-right: 4px; }
.tabsearch svg { width: 9px; height: 6px; stroke-width: 2.500; }
.tab { width: 166.400px; height: 39px; display: flex; align-items: center; padding: 0 15px 0 11px; position: relative; }
.tab > svg:first-child { width: 17px; height: 19px; margin-right: 8px; }
.tab span { width: 100px; white-space: nowrap; -webkit-mask-image: linear-gradient(90deg, #000 72%, transparent 95%); mask-image: linear-gradient(90deg, #000 72%, transparent 95%); }
.tab .short { width: 76px; }
.tab .cl { width: 8px; height: 8px; margin-left: auto; stroke-width: 2.800; }
.tab.sep::before { content: ""; position: absolute; left: 0; top: 12px; height: 16px; width: 1px; background: #444; }
.rec { width: 13px; height: 13px; border-radius: 50%; border: 2px solid #1b0000; outline: 1.500px solid #e58a86; background: #ee8f8a; margin-left: 3px; }
.tab.active { background: linear-gradient(#353537, #353537) 4px 4px / 158px 35px no-repeat; clip-path: inset(4px 4px 0 4px round 9px 9px 0 0); }
.newtab { width: 38px; padding-left: 12px; border-left: 1px solid #3a3a3a; }
.newtab svg { width: 11px; height: 11px; stroke-width: 2.200; }
.bwin { margin-left: auto; display: flex; gap: 36px; padding-right: 18px; }
.bwin svg { width: 11.500px; height: 13px; stroke-width: 1.200; }
.addr { height: 49px; background: #353537; display: flex; align-items: center; padding-left: 16px; clip-path: inset(0 round 8px 8px 0 0); }
.shared::before { content: ""; position: absolute; inset: 0 0 auto; height: 50px; background: #000; z-index: -1; }
.shared { isolation: isolate; }
.nav { width: 14px; height: 15px; stroke-width: 2.200; margin-right: 23.500px; color: #eee; }
.dim { color: #777; }
.omni { width: 1141px; height: 35px; margin-left: -3px; border-radius: 17px; background: #202124; display: flex; align-items: center; padding-right: 15px; }
.site { width: 28px; height: 28px; margin: 0 7px 0 3px; border-radius: 50%; background: #353638; display: grid; place-items: center; }
.site svg { width: 14px; height: 14px; stroke-width: 2; }
.url { font-size: 15px; letter-spacing: -.48px; color: #8d8f92; margin-right: auto; white-space: nowrap; }
.url b { font-weight: 400; color: #eee; letter-spacing: -.22px; }
.oi { width: 17px; height: 17px; margin-left: 17px; stroke-width: 1.800; color: #ccc; }
.exts { display: flex; align-items: center; padding-left: 11px; }
.exts span { width: 37.600px; display: grid; place-items: center; position: relative; }
.exts svg { width: 18px; height: 18px; }
.exts .mail svg { height: 14px; margin-top: -9px; }
.mail b { position: absolute; top: 2px; left: 4px; width: 29px; height: 16px; background: #d93030; border-radius: 3px; font-size: 10.500px; letter-spacing: -.4px; line-height: 16px; text-align: center; }
.bar { width: 2px; height: 18px; background: #111; flex: none; }
.exts .bar { margin: 0 8px; }
.exts .me svg { width: 20px; height: 21px; }
.exts .kebab svg { width: 5px; }
.marks { height: 35px; background: #353537; border-bottom: 1px solid #555; display: grid; align-items: center; padding: 0 0 5px 14px; font-size: 12.800px; letter-spacing: -.44px; white-space: nowrap;
  grid-template-columns: 79px 159px 155px 158px 52px 90px 159px 157px 160px 127px 47px 79px 28px 18px 1fr; }
.marks a { display: flex; align-items: center; gap: 6px; }
.marks a svg { width: 18px; height: 17px; }
.marks svg.ln { height: 15px; color: #bbb; }
.marks a:last-child { gap: 8px; }
.ovf { font-size: 20px; line-height: 20px; margin-top: -5px; }

/* spreadsheet */
.sheet { height: 649px; position: relative; overflow: hidden; background: #fffdff; color: #262529; font: 20px/20px "Liberation Sans", Arial, sans-serif; }
.row { height: 32.430px; display: grid; grid-template-columns: 153.500px 154px 261px 154.500px 204.200px 153.900px 153.900px 153.600px; padding-left: 124px; border-bottom: 1px solid #e1dfe4; }
.row:first-child { margin-top: -12px; }
.row::after { content: ""; border-right: 1px solid #dedce0; }
.row p { padding: 7.700px 4px 0 6px; border-right: 1px solid #dedce0; white-space: nowrap; }
.row p:first-child { box-shadow: -1px 0 0 #dedce0; }
.row .n { text-align: right; }
.row .merged { grid-column: span 7; text-align: center; font-weight: 700; padding-top: 7px; }
.peach p, .blue p, .tan p, .head p { margin-bottom: -1px; border-bottom: 1px solid; }
.peach p { background: #f5c99c; border-color: #e3b78c; }
.blue p { background: #e6edfb; border-color: #ccd4e2; }
.tan p { background: #debea3; border-color: #cdae95; }
.head p { background: #239f9f; border-color: #239f9f; color: #e4f6f6; font-weight: 700; }
.selection { position: absolute; left: 123px; top: 279px; width: 1237px; height: 359px; border: 2px solid #3a6fd0; border-width: 2px 2px 2px 1px; border-top-color: #1b85bd; }
.cellbox { position: absolute; left: -1px; top: -2px; width: 155px; height: 34px; border: 2px solid #1b77d6; }
.handle { position: absolute; right: -9px; bottom: -9px; width: 15px; height: 15px; border-radius: 50%; background: #0b57d0; border: 1px solid #fff; }
.hscroll { height: 20px; background: #dadcdc; border-bottom: 3px solid #fff; }
.sheettabs { height: 55px; background: #f9fbfd; border-top: 1px solid #e4e7ea; display: flex; color: #44474a; font: 400 21.500px/24px Roboto, sans-serif; letter-spacing: 1.100px; }
.sheettabs span { width: 141.500px; padding: 17px 0 0 19px; display: flex; }
.sheettabs .cur { width: 21px; padding: 0; background: #dfe7f7; }
.sheettabs .first { width: 225px; }
.sheettabs i { border: 6px solid transparent; border-top: 7px solid #44474a; border-bottom: 0; height: 7px; margin: 9px 0 0 17.500px; }
.sheettabs .first i { margin-left: 14px; }

/* taskbar inside the shared screen */
.rtask { height: 48px; background: #24262f; border-top: 1px solid #3d3f45; display: flex; align-items: center; }
.rweather { width: 306px; padding-left: 20px; display: flex; gap: 8px; position: relative; font-size: 13px; line-height: 21px; color: #d0d0d0; letter-spacing: -.1px; }
.rweather svg { width: 26px; height: 25px; margin-top: 10px; }
.rweather b { position: absolute; left: 33px; top: -2px; width: 16px; height: 17px; border-radius: 50%; background: #e8616c; font-size: 11px; line-height: 17px; text-align: center; }
.rwin { width: 25px; height: 26px; }
.rsearch { width: 228px; height: 34px; margin: 0 3.500px 0 14px; padding: 0 16px 0 12px; border-radius: 17px; background: #404146; display: flex; align-items: center; gap: 11px; font-size: 14px; color: #c8c8c8; letter-spacing: -.1px; }
.rsearch .ln { width: 15px; height: 15px; stroke-width: 2; }
.rsearch .watch { width: 24px; height: 29px; margin-left: auto; }
.rapps { display: flex; }
.rapps span { width: 46px; height: 44px; display: grid; place-items: center; position: relative; }
.rapps svg { width: 25px; height: 25px; }
.rapps .on { background: #2f3038; }
.rapps .on::after, .rapps .run::after { content: ""; position: absolute; bottom: 1px; width: 17px; height: 3px; border-radius: 2px; background: #48b5e8; }
.rapps .run::after { width: 7px; background: #8d8e92; }
.face { position: absolute; right: 5px; top: 3px; width: 16px; height: 16px; border-radius: 50%; background: radial-gradient(circle at 50% 40%, #c9a79b 3px, #5f474f 4px); }
.rapps b { position: absolute; right: 5px; top: 1px; width: 17px; height: 18px; border-radius: 50%; background: #4cc2f1; color: #0b2a3a; font-size: 12px; line-height: 18px; text-align: center; font-weight: 400; }
.rtray { display: flex; align-items: center; margin-left: 58.500px; font-size: 13px; line-height: 20px; letter-spacing: -.15px; color: #f0f0f0; }
.rtray span { width: 33.350px; display: grid; place-items: center; }
.rtray span svg { width: 17px; height: 18px; }
.rtray span .sm, .tray span .sm { width: 12px; height: 8px; }
.cy { color: #7fd0dc; }
.rtray .lang { width: 48px; text-align: center; margin-right: 2px; }
.rtray .st { width: 25px; }
.rtray .clock { width: 77px; text-align: right; }
.rtray .dnd { width: 33px; }
.rtray .cop { width: 40px; }
.rtray .cop svg { width: 24px; height: 24px; }
.cop { position: relative; }
.cop b { position: absolute; right: 5px; bottom: -2px; background: #fcc419; color: #1d1a10; font-size: 9px; line-height: 9px; padding: 0 2px; border-radius: 2px; }

/* overlays on the shared screen */
.who, .zoomer { position: absolute; top: 855px; height: 30px; background: rgba(18,18,18,.66); border-radius: 4px; display: flex; align-items: center; --gap: #1a1a1a; }
.who { left: 8px; width: 227px; padding: 0 10px 0 7px; justify-content: space-between; font-size: 14.600px; letter-spacing: -.13px; }
.who svg { width: 16px; height: 17px; stroke-width: 1.200; }
.zoomer { left: 245px; width: 82px; justify-content: space-between; padding: 0 13px 0 14px; }
.zoomer svg { width: 15px; height: 15px; }
.zoomer .dim { color: #555; }
.pen { position: absolute; left: 1541px; top: 125px; width: 36px; height: 36px; }
.tools { position: absolute; left: 1542px; top: 170px; width: 34px; padding: 0 1px; background: #fff; box-shadow: 0 1px 5px rgba(0,0,0,.5); display: flex; flex-direction: column; }
.tools span { height: 31.250px; display: grid; place-items: center; position: relative; }
.tools svg { width: 26px; height: 26px; fill: none; stroke: #3c3c3c; stroke-width: 1.600; }
.tools .hl { background: #33b2df; }
.tools .c::after { content: ""; position: absolute; right: 0; bottom: 1px; border: 3.500px solid; border-color: transparent #222 #222 transparent; }
.tools .d::before { content: ""; position: absolute; right: 0; top: 1px; width: 8px; height: 8px; border-radius: 50%; background: #fa1a8e; }
.tools .sw { grid-template-columns: 1fr 1fr; place-items: stretch; }
.sw i:nth-child(1) { background: #00aeef; } .sw i:nth-child(2) { background: #f7ec00; } .sw i:nth-child(3) { background: #f0148c; } .sw i:nth-child(4) { background: #000; }
.yl { background: #fdf200; }
.pointer { position: absolute; left: 408px; top: 0; width: 12px; height: 15px; }

/* participants */
.side { width: 302px; display: flex; flex-direction: column; }
.roster { height: 728px; padding: 25.500px 0 0 13.300px; display: grid; grid-template-columns: 137.500px 137.500px; grid-auto-rows: 137.500px; align-content: start; }
.roster > div { display: flex; flex-direction: column; align-items: center; }
.av { width: 88px; height: 88px; border-radius: 50%; display: grid; place-items: center; font-weight: 600; font-size: 34px; letter-spacing: -.3px; box-shadow: 0 1px 4px rgba(0,0,0,.35); }
.roster p { width: 116px; margin-top: 10px; padding-right: 2px; line-height: 20px; display: flex; justify-content: space-between; align-items: center; font-size: 14.500px; letter-spacing: -.2px; }
.roster p svg { width: 15px; height: 15px; stroke-width: 1.200; }
.roster .tight { width: 110px; }
.roster .mid { justify-content: center; padding: 0; }
.av.all { background: #292929; border: 1px solid #606060; }
.all svg { width: 32px; height: 32px; }
.self { height: 167px; background: #333; border-radius: 3px; display: grid; place-items: center; padding-bottom: 2px; }
.self .av { width: 70px; height: 71px; background: #f6e8cb; color: #835c10; font-size: 27px; }

/* host taskbar */
.taskbar { height: 60px; flex: none; display: flex; align-items: center; border-top: 1px solid #3b4450; background: linear-gradient(90deg, #1c222c 0%, #182637 20%, #14253c 34%, #192230 50%, #18202d 62%, #1b1f29 100%); font-size: 15px; line-height: 20px; letter-spacing: -.15px; }
.weather { width: 574px; padding-left: 25px; display: flex; gap: 9px; align-items: center; }
.weather p { margin-top: -3px; }
.weather svg { width: 30px; height: 30px; }
.weather em { font-style: normal; color: #c4c7cc; }
.start { width: 50px; display: grid; place-items: center; }
.start svg { width: 29px; height: 29px; }
.search { width: 275px; height: 40px; margin: 0 2.500px 0 7px; border-radius: 20px; background: #36414e; border: 1px solid #4b5560; display: flex; align-items: center; gap: 13px; padding: 0 3px 0 14px; font-size: 17px; color: #cfd2d6; letter-spacing: -.4px; }
.search .ln { width: 18px; height: 18px; stroke-width: 1.700; }
.search span { margin-left: auto; width: 65px; height: 33px; border-radius: 16px; background: #101010; color: #d2601a; font: 8px/32px "DejaVu Sans", sans-serif; letter-spacing: -.5px; text-align: center; }
.apps { display: flex; }
.apps > span { width: 55px; height: 50px; display: grid; place-items: center; position: relative; }
.apps svg { width: 30px; height: 30px; }
.apps .cop b { right: 12px; bottom: 9px; font-size: 10px; line-height: 10px; padding: 0 3px; }
.apps .run::after, .apps .on::after { content: ""; position: absolute; bottom: 1px; width: 8px; height: 4px; border-radius: 2px; background: #8c949d; }
.apps .on::after { width: 20px; background: #4cc2ff; }
.apps .on { width: 50px; margin-left: 2px; background: #262e39; border: 1px solid #303844; border-radius: 5px; }
.apps .on svg { width: 27px; height: 27px; }
.apps .new-tag { font-size: 8.500px; line-height: 9px; left: 19px; bottom: 9px; padding: 0 2px; color: #022; }
.cnt { position: absolute; right: 3px; top: 3px; width: 20px; height: 20px; border-radius: 50%; background: #c42b1c; font-weight: 400; font-size: 14px; text-align: center; }
.tray { margin-left: auto; display: flex; align-items: center; padding-right: 20px; }
.tray span { width: 40px; height: 50px; display: grid; place-items: center; }
.tray span svg { width: 20px; height: 20px; }
.tray .micon { background: #4cc2ff; color: #000; border-radius: 5px; --mic-fill: #000; }
.tray .micon svg { stroke-width: 1.300; }
.tray p { margin-top: -2px; }
.tray .lang { width: 56px; text-align: center; margin-right: 4px; }
.tray .st { width: 30px; }
.tray .clock { width: 92px; text-align: right; margin-right: 5px; }
```
